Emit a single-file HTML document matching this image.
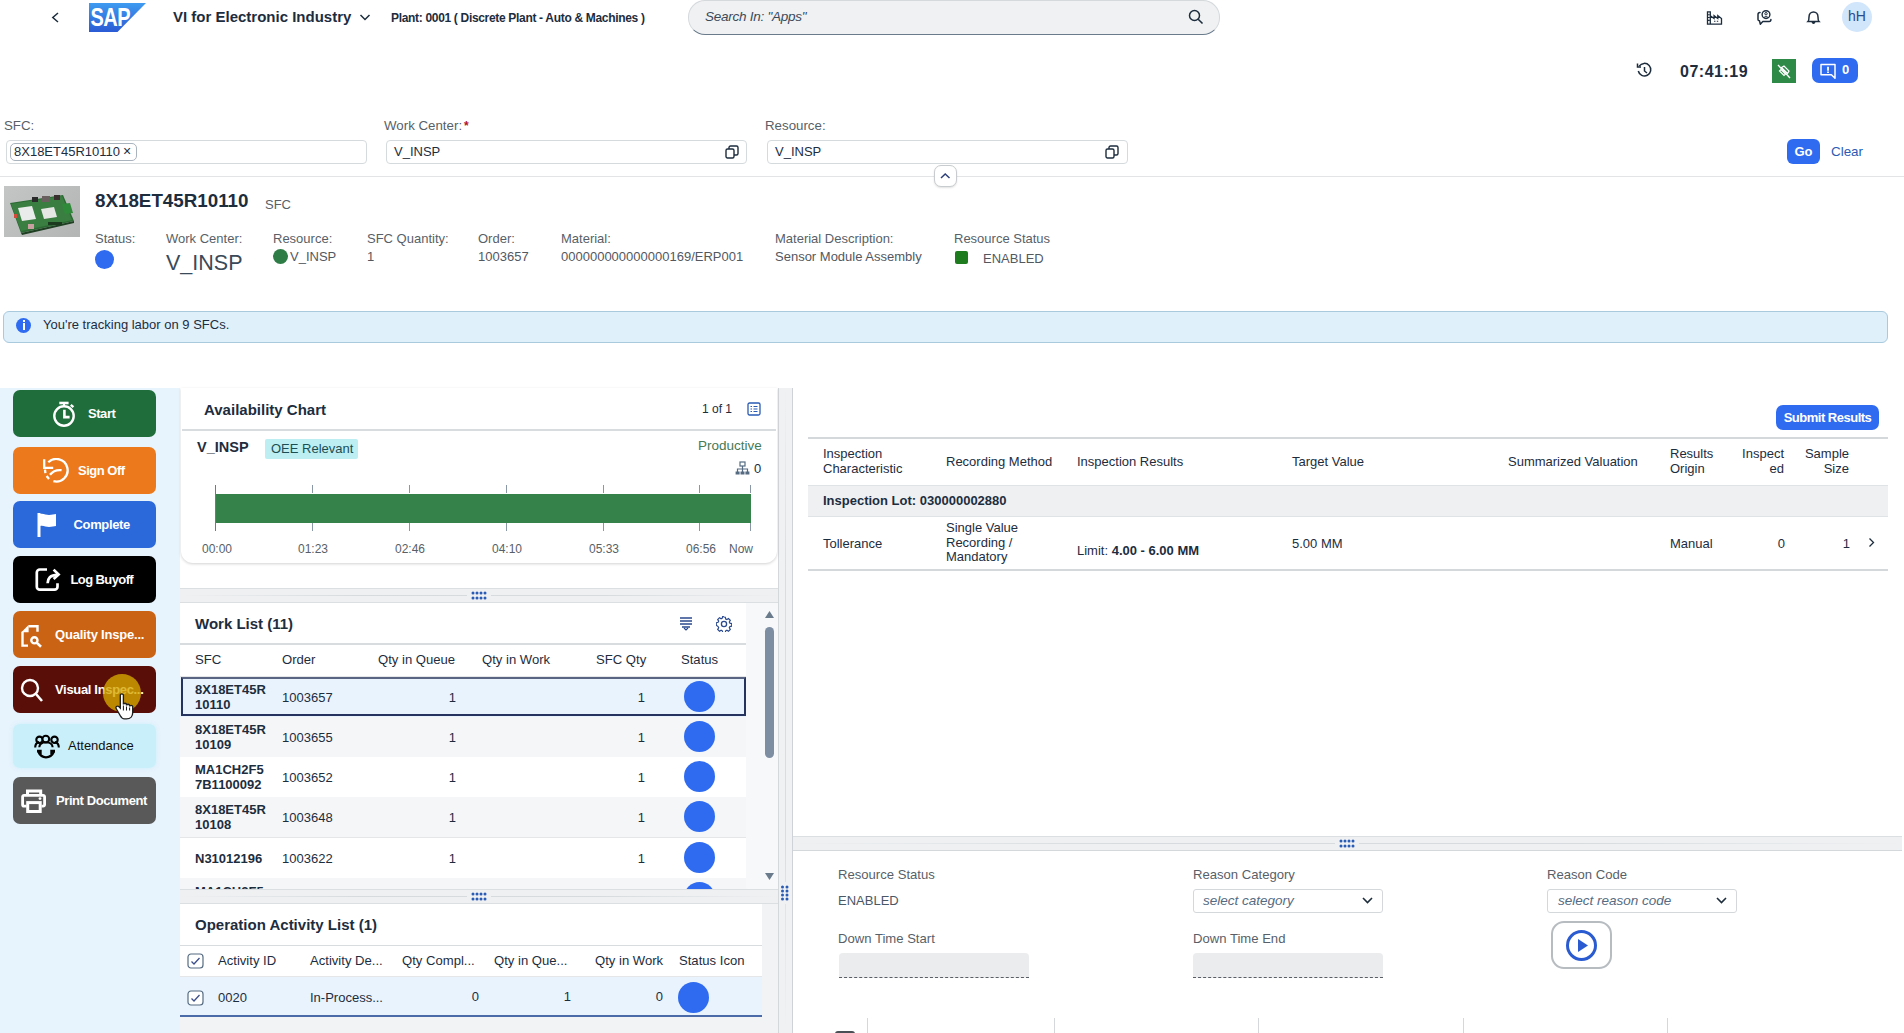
<!DOCTYPE html>
<html><head><meta charset="utf-8">
<style>
*{box-sizing:border-box;margin:0;padding:0}
html,body{width:1904px;height:1033px;overflow:hidden;background:#fff;font-family:"Liberation Sans",sans-serif;color:#1d2d3e}
.a{position:absolute;white-space:nowrap}
.lbl{color:#585f68;font-size:13px}
.val{color:#53585f;font-size:13px}
.btn{position:absolute;left:13px;width:143px;height:47px;border-radius:7px;color:#fff;font-weight:bold;font-size:13px}
.btn span{position:absolute;top:16px}
.btn svg{position:absolute}
.dot{position:absolute;border-radius:50%;background:#2f6bf0}
.hline{position:absolute;height:1px;background:#d9dcdf}
</style></head><body>

<!-- ============ HEADER ============ -->
<svg class="a" style="left:49px;top:10px" width="12" height="15" viewBox="0 0 12 15"><polyline points="9,3 3.8,7.5 9,12" fill="none" stroke="#1d2d3e" stroke-width="1.5"/></svg>
<svg class="a" style="left:89px;top:3px" width="57" height="29" viewBox="0 0 57 29">
<defs><linearGradient id="sg" x1="0" y1="0" x2="0" y2="1"><stop offset="0" stop-color="#3f9bf0"/><stop offset="1" stop-color="#2a5bd5"/></linearGradient></defs>
<polygon points="0,0 57,0 28.5,29 0,29" fill="url(#sg)"/>
<text x="0" y="0" font-family="Liberation Sans" font-weight="bold" font-size="25" fill="#fff" letter-spacing="-0.6" transform="translate(1.4 23) scale(0.8 1)">SAP</text>
</svg>
<div class="a" style="left:173px;top:8px;font-size:15px;font-weight:bold;color:#1d2d3e">VI for Electronic Industry</div>
<svg class="a" style="left:359px;top:13px" width="12" height="9" viewBox="0 0 12 9"><polyline points="1.5,2 6,6.5 10.5,2" fill="none" stroke="#1d2d3e" stroke-width="1.5"/></svg>
<div class="a" style="left:391px;top:11px;font-size:12px;font-weight:bold;color:#1d2d3e;letter-spacing:-0.32px">Plant: 0001 ( Discrete Plant - Auto &amp; Machines )</div>

<div class="a" style="left:688px;top:0px;width:532px;height:35px;border-radius:17px;background:#eff1f2;border:1px solid #d5d9dc;border-bottom:1px solid #6a7b8c"></div>
<div class="a" style="left:705px;top:9px;font-size:13.5px;letter-spacing:-0.25px;font-style:italic;color:#3b4a5a">Search In: "Apps"</div>
<svg class="a" style="left:1188px;top:9px" width="16" height="16" viewBox="0 0 16 16"><circle cx="6.5" cy="6.5" r="5" fill="none" stroke="#1d2d3e" stroke-width="1.5"/><line x1="10.2" y1="10.2" x2="14.5" y2="14.5" stroke="#1d2d3e" stroke-width="1.6"/></svg>

<!-- header icons -->
<svg class="a" style="left:1706px;top:11px" width="17" height="14" viewBox="0 0 17 15"><path d="M1 1h3v13H1zM4 5l4 3V5l4 3V5l4 3v6H4" fill="none" stroke="#1d2d3e" stroke-width="1.4"/><path d="M1.5 4h2M1.5 7h2M1.5 10h2M8 11h1.5M11 11h1.5" stroke="#1d2d3e" stroke-width="1.2"/></svg>
<svg class="a" style="left:1755px;top:9px" width="18" height="17" viewBox="0 0 18 17"><path d="M5 3.5Q3 3.5 3 5.5V10.5Q3 11.8 4.5 11.8L5.3 15.2 7.8 12.6H14.2Q15.9 12.6 15.9 10.6" fill="none" stroke="#1d2d3e" stroke-width="1.5" stroke-linejoin="round" stroke-linecap="round"/><circle cx="11" cy="5.6" r="3.9" fill="none" stroke="#1d2d3e" stroke-width="1.4"/><circle cx="11" cy="4.7" r="1.2" fill="none" stroke="#1d2d3e" stroke-width="1"/><path d="M8.9 8.4Q11 6.6 13.1 8.4" fill="none" stroke="#1d2d3e" stroke-width="1"/></svg>
<svg class="a" style="left:1806px;top:10px" width="15" height="15" viewBox="0 0 15 15"><path d="M2 11.5C3 10.5 3 9 3 7 3 4 5 2 7.5 2S12 4 12 7c0 2 0 3.5 1 4.5z" fill="none" stroke="#1d2d3e" stroke-width="1.5"/><path d="M6 12.5l1.5 1.5 1.5-1.5z" fill="#1d2d3e" stroke="#1d2d3e"/></svg>
<div class="a" style="left:1842px;top:2px;width:30px;height:30px;border-radius:50%;background:#d1e5fb;color:#2b4b8a;font-size:14px;text-align:center;line-height:29px">hH</div>

<!-- row 2 -->
<svg class="a" style="left:1636px;top:62px" width="17" height="17" viewBox="0 0 17 17"><path d="M3.2 4.2A6.3 6.3 0 1 1 2.3 9" fill="none" stroke="#1d2d3e" stroke-width="1.5"/><path d="M1.5 1.5v3.5h3.5" fill="none" stroke="#1d2d3e" stroke-width="1.5"/><path d="M8.5 5v4l2.5 2" fill="none" stroke="#1d2d3e" stroke-width="1.5"/></svg>
<div class="a" style="left:1680px;top:63px;font-size:16px;font-weight:bold;color:#1d2d3e;letter-spacing:0.5px">07:41:19</div>
<div class="a" style="left:1772px;top:59px;width:24px;height:24px;background:#2e8b47"></div>
<svg class="a" style="left:1774px;top:61px" width="20" height="20" viewBox="0 0 20 20"><line x1="4" y1="4" x2="16" y2="17" stroke="#fff" stroke-width="1.3"/><path d="M7.5 6.5L10 5l5 5-1.5 2.5z" fill="none" stroke="#fff" stroke-width="1.2"/><path d="M5.5 10L7 8.5l4.5 4.5L10 14.5z" fill="none" stroke="#fff" stroke-width="1.2"/></svg>
<div class="a" style="left:1812px;top:58px;width:46px;height:25px;border-radius:7px;background:#2f6bf0"></div>
<svg class="a" style="left:1819px;top:63px" width="18" height="17" viewBox="0 0 18 17"><path d="M2 1.5h14v13.8l-3.6-3.6H2z" fill="none" stroke="#fff" stroke-width="1.5" stroke-linejoin="round"/><path d="M9 3.8v3.9M9 8.6v1.4" stroke="#fff" stroke-width="1.8"/></svg>
<div class="a" style="left:1842px;top:62px;font-size:13px;font-weight:bold;color:#fff">0</div>

<!-- ============ FILTER BAR ============ -->
<div class="a lbl" style="left:4px;top:117.5px;font-size:13.3px">SFC:</div>
<div class="a lbl" style="left:384px;top:117.5px;font-size:13.3px">Work Center:<span style="color:#b0132b;font-weight:bold;font-size:12px;margin-left:2px">*</span></div>
<div class="a lbl" style="left:765px;top:117.5px;font-size:13.3px">Resource:</div>

<div class="a" style="left:6px;top:140px;width:361px;height:24px;border:1px solid #d5dadd;border-radius:4px;background:#fff"></div>
<div class="a" style="left:10px;top:143px;width:127px;height:18px;border:1px solid #aab4be;border-radius:5px;background:#fff"></div>
<div class="a" style="left:14px;top:144px;font-size:13px;color:#1d2d3e">8X18ET45R10110</div>
<div class="a" style="left:123px;top:143px;font-size:14px;color:#1d2d3e">×</div>

<div class="a" style="left:386px;top:140px;width:361px;height:24px;border:1px solid #d5dadd;border-radius:4px;background:#fff"></div>
<div class="a" style="left:394px;top:144px;font-size:13px;color:#1d2d3e">V_INSP</div>
<svg class="a" style="left:725px;top:145px" width="14" height="14" viewBox="0 0 14 14"><rect x="1" y="4" width="8" height="9" rx="1.5" fill="none" stroke="#1d2d3e" stroke-width="1.4"/><path d="M4 4V2.5C4 1.7 4.7 1 5.5 1h6C12.3 1 13 1.7 13 2.5v6c0 .8-.7 1.5-1.5 1.5H9" fill="none" stroke="#1d2d3e" stroke-width="1.4"/></svg>

<div class="a" style="left:767px;top:140px;width:361px;height:24px;border:1px solid #d5dadd;border-radius:4px;background:#fff"></div>
<div class="a" style="left:775px;top:144px;font-size:13px;color:#1d2d3e">V_INSP</div>
<svg class="a" style="left:1105px;top:145px" width="14" height="14" viewBox="0 0 14 14"><rect x="1" y="4" width="8" height="9" rx="1.5" fill="none" stroke="#1d2d3e" stroke-width="1.4"/><path d="M4 4V2.5C4 1.7 4.7 1 5.5 1h6C12.3 1 13 1.7 13 2.5v6c0 .8-.7 1.5-1.5 1.5H9" fill="none" stroke="#1d2d3e" stroke-width="1.4"/></svg>

<div class="a" style="left:1787px;top:139px;width:33px;height:25px;border-radius:6px;background:#2f6bf0;color:#fff;font-weight:bold;font-size:13px;text-align:center;line-height:25px">Go</div>
<div class="a" style="left:1831px;top:144px;font-size:13.4px;color:#2a5bb5">Clear</div>

<div class="hline" style="left:0;top:176px;width:1904px;background:#e2e4e6"></div>
<div class="a" style="left:934px;top:165px;width:23px;height:22px;border-radius:7px;background:#fff;border:1.5px solid #c9cccf;box-shadow:0 1px 2px rgba(0,0,0,.12)"></div>
<svg class="a" style="left:939px;top:171px" width="12" height="9" viewBox="0 0 12 9"><polyline points="2,7 6.2,3 10.5,7" fill="none" stroke="#2e3f78" stroke-width="1.5"/></svg>


<!-- ============ SFC HEADER ============ -->
<div class="a" style="left:4px;top:186px;width:76px;height:51px;background:linear-gradient(135deg,#c4c6c6,#b3b5b5);overflow:hidden">
 <svg width="76" height="51" viewBox="0 0 76 51">
 <polygon points="6,17 59,9 70,35 17,47" fill="#2c6a34"/>
 <polygon points="7,18 58,10 68,34 17,45" fill="#3b7e42"/>
 <polygon points="17,47 70,35 70,37 18,49" fill="#1f3f22"/>
 <polygon points="14,22 28,20 32,33 18,35" fill="#e9ecea"/>
 <polygon points="37,23 50,21 53,31 40,33" fill="#e4e7e4"/>
 <rect x="28" y="11" width="6" height="5" fill="#2a2a2a"/><rect x="38" y="10" width="8" height="6" fill="#6a6060"/><rect x="50" y="9" width="6" height="5" fill="#3a3030"/>
 <polygon points="58,18 66,17 69,27 61,28" fill="#2f8a3a"/>
 <rect x="24" y="38" width="6" height="5" fill="#c9a0a0"/><rect x="44" y="36" width="14" height="3" fill="#1b3a1e"/>
 <rect x="10" y="28" width="3" height="4" fill="#d14b3b"/>
 </svg>
</div>
<div class="a" style="left:95px;top:190px;font-size:18.8px;font-weight:bold;color:#1d2d3e">8X18ET45R10110</div>
<div class="a lbl" style="left:265px;top:197px;font-size:13px">SFC</div>

<div class="a lbl" style="left:95px;top:231px">Status:</div>
<div class="a lbl" style="left:166px;top:231px">Work Center:</div>
<div class="a lbl" style="left:273px;top:231px">Resource:</div>
<div class="a lbl" style="left:367px;top:231px">SFC Quantity:</div>
<div class="a lbl" style="left:478px;top:231px">Order:</div>
<div class="a lbl" style="left:561px;top:231px">Material:</div>
<div class="a lbl" style="left:775px;top:231px">Material Description:</div>
<div class="a lbl" style="left:954px;top:231px">Resource Status</div>

<div class="dot" style="left:95px;top:250px;width:19px;height:19px"></div>
<div class="a" style="left:166px;top:251px;font-size:21.5px;color:#3a4a58">V_INSP</div>
<div class="a" style="left:273px;top:249px;width:15px;height:15px;border-radius:50%;background:#2e7d47"></div>
<div class="a val" style="left:290px;top:249px">V_INSP</div>
<div class="a val" style="left:367px;top:249px">1</div>
<div class="a val" style="left:478px;top:249px">1003657</div>
<div class="a val" style="left:561px;top:249px">000000000000000169/ERP001</div>
<div class="a val" style="left:775px;top:249px">Sensor Module Assembly</div>
<div class="a" style="left:955px;top:251px;width:13px;height:13px;border-radius:2px;background:#1e7b1e"></div>
<div class="a val" style="left:983px;top:251px">ENABLED</div>

<!-- ============ INFO BAR ============ -->
<div class="a" style="left:3px;top:311px;width:1885px;height:32px;border-radius:6px;background:#dff0fb;border:1px solid #a9c9dd"></div>
<div class="a" style="left:16px;top:318px;width:15px;height:15px;border-radius:50%;background:#2f6bf0"></div>
<div class="a" style="left:22.5px;top:320px;width:2px;height:2px;background:#fff"></div>
<div class="a" style="left:22.5px;top:323px;width:2px;height:7px;background:#fff"></div>
<div class="a" style="left:43px;top:317px;font-size:13px;color:#1d2d3e">You're tracking labor on 9 SFCs.</div>


<!-- ============ SIDEBAR ============ -->
<div class="a" style="left:0;top:388px;width:180px;height:645px;background:#e7f3fd"></div>

<div class="btn" style="top:390px;background:#1f6d3b">
 <svg style="left:40px;top:11px" width="24" height="26" viewBox="0 0 24 26"><circle cx="11" cy="15" r="9.7" fill="none" stroke="#fff" stroke-width="2.4"/><path d="M6.3 2h9.3" stroke="#fff" stroke-width="2.6"/><path d="M11 2v3" stroke="#fff" stroke-width="2"/><path d="M17.8 3.8l2.6 2.4" stroke="#fff" stroke-width="2.4"/><path d="M11.4 8.8v7.3h5.2" fill="none" stroke="#fff" stroke-width="2.6"/></svg>
 <span style="left:75px;letter-spacing:-0.45px">Start</span></div>
<div class="btn" style="top:447px;background:#ec7a1c">
 <svg style="left:30px;top:11px" width="27" height="27" viewBox="0 0 27 27"><path d="M5.3 4.3A11.3 11.3 0 1 1 10.4 23.2" fill="none" stroke="#fff" stroke-width="2.3"/><path d="M6 21L3.6 18M2.4 15.2L2 11.6" fill="none" stroke="#fff" stroke-width="2.3"/><path d="M1.2 1.2v8.7h9" fill="none" stroke="#fff" stroke-width="2.3"/><path d="M7 16.8Q11 11.5 18.6 12.2" fill="none" stroke="#fff" stroke-width="2.3"/></svg>
 <span style="left:65px;letter-spacing:-0.5px">Sign Off</span></div>
<div class="btn" style="top:501px;background:#2b68d9">
 <svg style="left:24px;top:11px" width="22" height="26" viewBox="0 0 22 26"><path d="M2 1v24" stroke="#fff" stroke-width="3"/><path d="M3 2c3-1 6 1 9 1s5-1 7-1v12c-2 0-4 1-7 1s-6-2-9-1z" fill="#fff"/></svg>
 <span style="left:60.5px;letter-spacing:-0.35px">Complete</span></div>
<div class="btn" style="top:556px;background:#000">
 <svg style="left:21px;top:11px" width="28" height="26" viewBox="0 0 28 26"><path d="M13 2.5H5.8a3 3 0 0 0-3 3v14.2a3 3 0 0 0 3 3h14.7a3 3 0 0 0 3-3V16.3" fill="none" stroke="#fff" stroke-width="2.7"/><path d="M13.6 16.3c0-5 2.5-8.5 10-8.5" fill="none" stroke="#fff" stroke-width="2.7"/><path d="M19.6 2.6l5 4.9-5 4.6" fill="none" stroke="#fff" stroke-width="2.7"/></svg>
 <span style="left:57.5px;letter-spacing:-0.6px">Log Buyoff</span></div>
<div class="btn" style="top:611px;background:#cb6314">
 <svg style="left:7px;top:10px" width="26" height="27" viewBox="0 0 26 27"><polygon points="1.3,11.3 8.6,4 8.6,11.3" fill="#fff"/><path d="M8.6 5.2H17.5V10.8" fill="none" stroke="#fff" stroke-width="2.4"/><path d="M2.5 10.8V24.6H8" fill="none" stroke="#fff" stroke-width="2.4"/><circle cx="14.4" cy="19.3" r="3.1" fill="none" stroke="#fff" stroke-width="2.4"/><path d="M16.6 21.6l4.4 4.2" stroke="#fff" stroke-width="2.6"/></svg>
 <span style="left:42px;letter-spacing:-0.2px">Quality Inspe...</span></div>
<div class="btn" style="top:666px;background:#5a0e08">
 <svg style="left:7px;top:11px" width="24" height="26" viewBox="0 0 24 26"><circle cx="10" cy="11" r="8" fill="none" stroke="#fff" stroke-width="2.4"/><path d="M16 17l6 7" stroke="#fff" stroke-width="2.6"/></svg>
 <span style="left:42px;letter-spacing:-0.33px">Visual Inspec...</span></div>
<div class="a" style="left:103px;top:674px;width:38px;height:38px;border-radius:50%;background:rgba(214,168,0,.8)"></div>
<svg class="a" style="left:114px;top:692px" width="25" height="31" viewBox="0 0 24 30"><path d="M6 3c0-1.5 3-1.5 3 0v9c0-1.5 3-1.5 3 0v1c0-1.5 3-1.5 3 0v1c0-1.5 3-1.5 3 0v6c0 3-2 6-6 6H10c-2 0-3-1-4-3L2 16c-1-1.5 1-3 2.5-2L6 15.5z" fill="#fff" stroke="#1d1d1d" stroke-width="1.3"/><path d="M9 13v5M12 14v4M15 15v3" stroke="#1d1d1d" stroke-width="1"/></svg>
<div class="btn" style="top:724px;height:44px;background:#c9f0fa;color:#1d2d3e;box-shadow:0 0 4px rgba(201,240,250,.9)">
 <svg style="left:20px;top:8px" width="28" height="30" viewBox="0 0 28 30"><circle cx="6.5" cy="7.8" r="3.2" fill="none" stroke="#000" stroke-width="2.1"/><circle cx="21.5" cy="7.8" r="3.2" fill="none" stroke="#000" stroke-width="2.1"/><circle cx="12.8" cy="7.1" r="3.4" fill="#c9f0fa" stroke="#000" stroke-width="2.1"/><path d="M2.2 15.6c0-3.5 1.8-5.2 4-5.5M25.8 15.6c0-3.5-1.8-5.2-4-5.5M6.3 15.2c0-3 2.5-5 6.5-5s6.8 2 6.8 5" fill="none" stroke="#000" stroke-width="2.1"/><path d="M5.2 19.5c1.5 3.5 4.5 5.8 7.8 5.8s6.5-2.3 8-5.8" fill="none" stroke="#000" stroke-width="2.2"/><path d="M4 19h3.5v3.2M22 19h-3.5v3.2" fill="none" stroke="#000" stroke-width="2.4"/></svg>
 <span style="left:55px;top:14px;font-weight:normal;color:#111">Attendance</span></div>
<div class="btn" style="top:777px;background:#595959">
 <svg style="left:7px;top:10px" width="28" height="28" viewBox="0 0 28 28"><path d="M7.5 7.2V4h13.2v3.2" fill="none" stroke="#fff" stroke-width="3"/><path d="M6.5 19.1H4a1.4 1.4 0 0 1-1.4-1.4V9.8A1.4 1.4 0 0 1 4 8.4h19.2a1.4 1.4 0 0 1 1.4 1.4v7.9a1.4 1.4 0 0 1-1.4 1.4H21.5" fill="none" stroke="#fff" stroke-width="2.8"/><rect x="7.7" y="15.6" width="12.5" height="8.9" fill="none" stroke="#fff" stroke-width="3"/><circle cx="20" cy="11.6" r="1.4" fill="#fff"/></svg>
 <span style="left:43px;letter-spacing:-0.42px">Print Document</span></div>


<!-- ============ MIDDLE PANEL ============ -->
<div class="a" style="left:180px;top:388px;width:613px;height:645px;background:#fff"></div>

<!-- work list -->
<div class="a" style="left:180px;top:603px;width:598px;height:286px;background:#f7f8f9"></div>
<div class="a" style="left:180px;top:603px;width:566px;height:286px;background:#fff;overflow:hidden">
</div><div class="a" style="left:180px;top:677px;width:566px;height:41px;background:#e8f3fd;border-bottom:1px solid #e4e6e8"></div>
<div class="a" style="left:195px;top:683px;font-size:13px;font-weight:bold;line-height:14.5px;color:#1d2d3e">8X18ET45R<br>10110</div>
<div class="a" style="left:282px;top:690px;font-size:13px;color:#1d2d3e">1003657</div>
<div class="a" style="left:440px;width:16px;text-align:right;top:690px;font-size:13px;color:#1d2d3e">1</div>
<div class="a" style="left:629px;width:16px;text-align:right;top:690px;font-size:13px;color:#1d2d3e">1</div>
<div class="dot" style="left:684px;top:681px;width:31px;height:31px"></div>
<div class="a" style="left:180px;top:717px;width:566px;height:41px;background:#f5f6f7;border-bottom:1px solid #e4e6e8"></div>
<div class="a" style="left:195px;top:723px;font-size:13px;font-weight:bold;line-height:14.5px;color:#1d2d3e">8X18ET45R<br>10109</div>
<div class="a" style="left:282px;top:730px;font-size:13px;color:#1d2d3e">1003655</div>
<div class="a" style="left:440px;width:16px;text-align:right;top:730px;font-size:13px;color:#1d2d3e">1</div>
<div class="a" style="left:629px;width:16px;text-align:right;top:730px;font-size:13px;color:#1d2d3e">1</div>
<div class="dot" style="left:684px;top:721px;width:31px;height:31px"></div>
<div class="a" style="left:180px;top:757px;width:566px;height:41px;background:#fff;border-bottom:1px solid #e4e6e8"></div>
<div class="a" style="left:195px;top:763px;font-size:13px;font-weight:bold;line-height:14.5px;color:#1d2d3e">MA1CH2F5<br>7B1100092</div>
<div class="a" style="left:282px;top:770px;font-size:13px;color:#1d2d3e">1003652</div>
<div class="a" style="left:440px;width:16px;text-align:right;top:770px;font-size:13px;color:#1d2d3e">1</div>
<div class="a" style="left:629px;width:16px;text-align:right;top:770px;font-size:13px;color:#1d2d3e">1</div>
<div class="dot" style="left:684px;top:761px;width:31px;height:31px"></div>
<div class="a" style="left:180px;top:797px;width:566px;height:41px;background:#f5f6f7;border-bottom:1px solid #e4e6e8"></div>
<div class="a" style="left:195px;top:803px;font-size:13px;font-weight:bold;line-height:14.5px;color:#1d2d3e">8X18ET45R<br>10108</div>
<div class="a" style="left:282px;top:810px;font-size:13px;color:#1d2d3e">1003648</div>
<div class="a" style="left:440px;width:16px;text-align:right;top:810px;font-size:13px;color:#1d2d3e">1</div>
<div class="a" style="left:629px;width:16px;text-align:right;top:810px;font-size:13px;color:#1d2d3e">1</div>
<div class="dot" style="left:684px;top:801px;width:31px;height:31px"></div>
<div class="a" style="left:180px;top:838px;width:566px;height:41px;background:#fff;border-bottom:1px solid #e4e6e8"></div>
<div class="a" style="left:195px;top:851px;font-size:13px;font-weight:bold;color:#1d2d3e">N31012196</div>
<div class="a" style="left:282px;top:851px;font-size:13px;color:#1d2d3e">1003622</div>
<div class="a" style="left:440px;width:16px;text-align:right;top:851px;font-size:13px;color:#1d2d3e">1</div>
<div class="a" style="left:629px;width:16px;text-align:right;top:851px;font-size:13px;color:#1d2d3e">1</div>
<div class="dot" style="left:684px;top:842px;width:31px;height:31px"></div>
<div class="a" style="left:180px;top:878px;width:566px;height:11px;overflow:hidden;background:#f5f6f7"><div class="a" style="left:15px;top:6px;font-size:13px;font-weight:bold;color:#1d2d3e">MA1CH2F5</div><div class="dot" style="left:504px;top:4px;width:31px;height:31px"></div></div><div class="a" style="left:181px;top:677px;width:565px;height:39px;border:2px solid #27335f;border-top-color:#5a6483"></div>
<div class="a" style="left:195px;top:615px;font-size:15px;font-weight:bold;color:#1d2d3e">Work List (11)</div>
<svg class="a" style="left:679px;top:616px" width="14" height="15" viewBox="0 0 14 15"><path d="M1 2h12M1 5h12M1 8h12M3 11h8" stroke="#2a4a8f" stroke-width="1.3"/><path d="M5 12l2 2 2-2" fill="none" stroke="#2a4a8f" stroke-width="1.2"/></svg>
<svg class="a" style="left:716px;top:616px" width="16" height="16" viewBox="0 0 16 16"><path d="M8 1l1.3.2.4 1.8 1.2.6 1.6-1 1.8 1.8-1 1.6.6 1.2 1.8.4v2.6l-1.8.4-.6 1.2 1 1.6-1.8 1.8-1.6-1-1.2.6-.4 1.8H6.7l-.4-1.8-1.2-.6-1.6 1-1.8-1.8 1-1.6-.6-1.2L.3 9.3V6.7l1.8-.4.6-1.2-1-1.6 1.8-1.8 1.6 1 1.2-.6.4-1.8z" fill="none" stroke="#2a4a8f" stroke-width="1.2"/><circle cx="8" cy="8" r="2.6" fill="none" stroke="#2a4a8f" stroke-width="1.3"/></svg>
<div class="hline" style="left:180px;top:643px;width:566px;height:2px;background:#d9dcdf"></div>
<div class="a" style="left:195px;top:652px;font-size:13.2px;color:#1d2d3e">SFC</div>
<div class="a" style="left:282px;top:652px;font-size:13.1px;color:#1d2d3e">Order</div>
<div class="a" style="left:378px;top:652px;font-size:13.1px;color:#1d2d3e">Qty in Queue</div>
<div class="a" style="left:482px;top:652px;font-size:13.1px;color:#1d2d3e">Qty in Work</div>
<div class="a" style="left:596px;top:652px;font-size:13.1px;color:#1d2d3e">SFC Qty</div>
<div class="a" style="left:681px;top:652px;font-size:13.1px;color:#1d2d3e">Status</div>
<div class="hline" style="left:180px;top:676px;width:566px;background:#e4e6e8"></div>
<!-- scrollbar -->
<svg class="a" style="left:764px;top:610px" width="11" height="9" viewBox="0 0 11 9"><polygon points="5.5,1 10,8 1,8" fill="#6a7b8c"/></svg>
<div class="a" style="left:765px;top:627px;width:9px;height:131px;border-radius:5px;background:#7d8ea3"></div>
<svg class="a" style="left:764px;top:872px" width="11" height="9" viewBox="0 0 11 9"><polygon points="1,1 10,1 5.5,8" fill="#6a7b8c"/></svg>

<!-- splitter 2 -->
<div class="a" style="left:180px;top:889px;width:598px;height:15px;background:#eef0f2;border-top:1px solid #dcdfe2;border-bottom:1px solid #dcdfe2"></div>
<svg class="a" style="left:471px;top:892px" width="16" height="9" viewBox="0 0 16 9"><g fill="#2a5bb5"><circle cx="2" cy="2" r="1.5"/><circle cx="6" cy="2" r="1.5"/><circle cx="10" cy="2" r="1.5"/><circle cx="14" cy="2" r="1.5"/><circle cx="2" cy="7" r="1.5"/><circle cx="6" cy="7" r="1.5"/><circle cx="10" cy="7" r="1.5"/><circle cx="14" cy="7" r="1.5"/></g></svg>

<!-- operation activity list -->
<div class="a" style="left:180px;top:904px;width:598px;height:129px;background:#f2f3f4"></div>
<div class="a" style="left:180px;top:904px;width:582px;height:111px;background:#fff"></div>
<div class="a" style="left:195px;top:916px;font-size:15px;font-weight:bold;color:#1d2d3e">Operation Activity List (1)</div>
<div class="hline" style="left:180px;top:945px;width:582px;background:#d9dcdf"></div>
<svg class="a" style="left:187px;top:953px" width="17" height="16" viewBox="0 0 17 16"><rect x="1" y="1" width="15" height="14" rx="3" fill="#fff" stroke="#556b82" stroke-width="1.2"/><path d="M4.5 8.5l2.5 2.5 5.5-6" fill="none" stroke="#3d4f8a" stroke-width="1.3"/></svg>
<div class="a" style="left:218px;top:953px;font-size:13.1px;color:#1d2d3e">Activity ID</div>
<div class="a" style="left:310px;top:953px;font-size:13.1px;color:#1d2d3e">Activity De...</div>
<div class="a" style="left:402px;top:953px;font-size:13.1px;color:#1d2d3e">Qty Compl...</div>
<div class="a" style="left:494px;top:953px;font-size:13.1px;color:#1d2d3e">Qty in Que...</div>
<div class="a" style="left:595px;top:953px;font-size:13.1px;color:#1d2d3e">Qty in Work</div>
<div class="a" style="left:679px;top:953px;font-size:13.1px;color:#1d2d3e">Status Icon</div>
<div class="hline" style="left:180px;top:976px;width:582px;background:#e4e6e8"></div>
<div class="a" style="left:180px;top:977px;width:582px;height:39.5px;background:#e8f3fd;border-bottom:2px solid #4a6aa8"></div>
<svg class="a" style="left:187px;top:990px" width="17" height="16" viewBox="0 0 17 16"><rect x="1" y="1" width="15" height="14" rx="3" fill="#fff" stroke="#556b82" stroke-width="1.2"/><path d="M4.5 8.5l2.5 2.5 5.5-6" fill="none" stroke="#3d4f8a" stroke-width="1.3"/></svg>
<div class="a" style="left:218px;top:990px;font-size:13px;color:#1d2d3e">0020</div>
<div class="a" style="left:310px;top:990px;font-size:13px;color:#1d2d3e">In-Process...</div>
<div class="a" style="left:460px;width:19px;text-align:right;top:989px;font-size:13px;color:#1d2d3e">0</div>
<div class="a" style="left:552px;width:19px;text-align:right;top:989px;font-size:13px;color:#1d2d3e">1</div>
<div class="a" style="left:644px;width:19px;text-align:right;top:989px;font-size:13px;color:#1d2d3e">0</div>
<div class="dot" style="left:678px;top:982px;width:31px;height:31px"></div>

<!-- vertical splitter -->
<div class="a" style="left:778px;top:388px;width:15px;height:645px;background:#eff1f3;border-left:1px solid #d5d8db;border-right:1px solid #cfd3d7"></div>
<svg class="a" style="left:780px;top:885px" width="10" height="16" viewBox="0 0 10 16"><g fill="#2a5bb5"><circle cx="2.5" cy="2" r="1.5"/><circle cx="7" cy="2" r="1.5"/><circle cx="2.5" cy="6" r="1.5"/><circle cx="7" cy="6" r="1.5"/><circle cx="2.5" cy="10" r="1.5"/><circle cx="7" cy="10" r="1.5"/><circle cx="2.5" cy="14" r="1.5"/><circle cx="7" cy="14" r="1.5"/></g></svg>

<!-- availability card -->
<div class="a" style="left:181px;top:388px;width:596px;height:175px;background:#fff;border-radius:0 0 12px 12px;box-shadow:0 1px 3px rgba(0,0,0,.18)"></div>
<div class="a" style="left:204px;top:401px;font-size:15px;font-weight:bold;color:#1d2d3e">Availability Chart</div>
<div class="a" style="left:702px;top:402px;font-size:12px;color:#1d2d3e">1 of 1</div>
<svg class="a" style="left:747px;top:402px" width="14" height="14" viewBox="0 0 14 14"><rect x="1" y="1" width="12" height="12" rx="1.5" fill="none" stroke="#2a5bb5" stroke-width="1.3"/><path d="M3.5 4.5h1.5M3.5 7h1.5M3.5 9.5h1.5M6.5 4.5h4M6.5 7h4M6.5 9.5h4" stroke="#2a5bb5" stroke-width="1.2"/></svg>
<div class="hline" style="left:182px;top:429px;width:594px;height:2px;background:#d9dcdf"></div>
<div class="a" style="left:197px;top:439px;font-size:14.5px;font-weight:bold;color:#1d2d3e">V_INSP</div>
<div class="a" style="left:265px;top:439px;width:93px;height:20px;background:#bdeef1;border-radius:2px"></div>
<div class="a" style="left:271px;top:441px;font-size:13px;color:#1b4d55">OEE Relevant</div>
<div class="a" style="left:698px;top:438px;font-size:13.5px;color:#467a55">Productive</div>
<svg class="a" style="left:735px;top:461px" width="15" height="14" viewBox="0 0 15 14"><rect x="5" y="1" width="5" height="4" fill="none" stroke="#556b82" stroke-width="1.2"/><path d="M7.5 5v3M2.5 11V8h10v3M7.5 8v3" fill="none" stroke="#556b82" stroke-width="1.2"/><rect x="0.6" y="10.5" width="4" height="3" fill="#556b82"/><rect x="5.5" y="10.5" width="4" height="3" fill="#556b82"/><rect x="10.4" y="10.5" width="4" height="3" fill="#556b82"/></svg>
<div class="a" style="left:754px;top:461px;font-size:13px;color:#1d2d3e">0</div>

<div class="a" style="left:215px;top:494px;width:536px;height:29px;background:#35824a"></div>
<div class="a" style="left:215px;top:485px;width:1px;height:46px;background:#6a7b8c"></div>
<div class="a" style="left:312px;top:485px;width:1px;height:8px;background:#8a97a4"></div><div class="a" style="left:312px;top:523px;width:1px;height:8px;background:#8a97a4"></div>
<div class="a" style="left:409px;top:485px;width:1px;height:8px;background:#8a97a4"></div><div class="a" style="left:409px;top:523px;width:1px;height:8px;background:#8a97a4"></div>
<div class="a" style="left:506px;top:485px;width:1px;height:8px;background:#8a97a4"></div><div class="a" style="left:506px;top:523px;width:1px;height:8px;background:#8a97a4"></div>
<div class="a" style="left:603px;top:485px;width:1px;height:8px;background:#8a97a4"></div><div class="a" style="left:603px;top:523px;width:1px;height:8px;background:#8a97a4"></div>
<div class="a" style="left:699px;top:485px;width:1px;height:8px;background:#8a97a4"></div><div class="a" style="left:699px;top:523px;width:1px;height:8px;background:#8a97a4"></div>
<div class="a" style="left:750px;top:485px;width:1px;height:8px;background:#8a97a4"></div><div class="a" style="left:750px;top:523px;width:1px;height:8px;background:#8a97a4"></div>
<div class="a lbl" style="left:202px;top:542px;font-size:12px">00:00</div>
<div class="a lbl" style="left:298px;top:542px;font-size:12px">01:23</div>
<div class="a lbl" style="left:395px;top:542px;font-size:12px">02:46</div>
<div class="a lbl" style="left:492px;top:542px;font-size:12px">04:10</div>
<div class="a lbl" style="left:589px;top:542px;font-size:12px">05:33</div>
<div class="a lbl" style="left:686px;top:542px;font-size:12px">06:56</div>
<div class="a lbl" style="left:729px;top:542px;font-size:12px">Now</div>

<!-- splitter 1 -->
<div class="a" style="left:180px;top:588px;width:598px;height:15px;background:#eef0f2;border-top:1px solid #dcdfe2;border-bottom:1px solid #dcdfe2"></div>
<svg class="a" style="left:471px;top:591px" width="16" height="9" viewBox="0 0 16 9"><g fill="#2a5bb5"><circle cx="2" cy="2" r="1.5"/><circle cx="6" cy="2" r="1.5"/><circle cx="10" cy="2" r="1.5"/><circle cx="14" cy="2" r="1.5"/><circle cx="2" cy="7" r="1.5"/><circle cx="6" cy="7" r="1.5"/><circle cx="10" cy="7" r="1.5"/><circle cx="14" cy="7" r="1.5"/></g></svg>


<!-- ============ RIGHT PANEL ============ -->
<div class="a" style="left:1776px;top:405px;width:103px;height:25px;border-radius:7px;background:#2f6bf0;color:#fff;font-weight:bold;font-size:13px;text-align:center;line-height:25px;letter-spacing:-0.5px">Submit Results</div>
<div class="hline" style="left:808px;top:437px;width:1080px;height:2px;background:#d5d8db"></div>
<div class="a" style="left:823px;top:447px;font-size:13px;line-height:14.7px;color:#1d2d3e">Inspection<br>Characteristic</div>
<div class="a" style="left:946px;top:454px;font-size:13px;color:#1d2d3e">Recording Method</div>
<div class="a" style="left:1077px;top:454px;font-size:13px;color:#1d2d3e">Inspection Results</div>
<div class="a" style="left:1292px;top:454px;font-size:13px;color:#1d2d3e">Target Value</div>
<div class="a" style="left:1508px;top:454px;font-size:13px;color:#1d2d3e">Summarized Valuation</div>
<div class="a" style="left:1670px;top:447px;font-size:13px;line-height:14.7px;color:#1d2d3e">Results<br>Origin</div>
<div class="a" style="left:1729px;width:55px;text-align:right;top:447px;font-size:13px;line-height:14.7px;color:#1d2d3e">Inspect<br>ed</div>
<div class="a" style="left:1789px;width:60px;text-align:right;top:447px;font-size:13px;line-height:14.7px;color:#1d2d3e">Sample<br>Size</div>
<div class="a" style="left:808px;top:485px;width:1080px;height:32px;background:#eef0f2;border-top:1px solid #e0e3e6;border-bottom:1px solid #e0e3e6"></div>
<div class="a" style="left:823px;top:493px;font-size:13px;font-weight:bold;color:#1d2d3e">Inspection Lot: 030000002880</div>
<div class="a" style="left:823px;top:536px;font-size:13px;color:#1d2d3e">Tollerance</div>
<div class="a" style="left:946px;top:521px;font-size:13px;line-height:14.7px;color:#1d2d3e">Single Value<br>Recording /<br>Mandatory</div>
<div class="a" style="left:1077px;top:543px;font-size:13px;color:#1d2d3e">Limit: <b>4.00 - 6.00 MM</b></div>
<div class="a" style="left:1292px;top:536px;font-size:13px;color:#1d2d3e">5.00 MM</div>
<div class="a" style="left:1670px;top:536px;font-size:13px;color:#1d2d3e">Manual</div>
<div class="a" style="left:1765px;width:20px;text-align:right;top:536px;font-size:13px;color:#1d2d3e">0</div>
<div class="a" style="left:1830px;width:20px;text-align:right;top:536px;font-size:13px;color:#1d2d3e">1</div>
<svg class="a" style="left:1867px;top:537px" width="9" height="11" viewBox="0 0 9 11"><polyline points="2.5,1.5 6.5,5.5 2.5,9.5" fill="none" stroke="#1d2d3e" stroke-width="1.3"/></svg>
<div class="hline" style="left:808px;top:569px;width:1080px;height:2px;background:#d5d8db"></div>

<!-- horizontal splitter right -->
<div class="a" style="left:793px;top:836px;width:1109px;height:15px;background:#eef0f2;border-top:1px solid #dcdfe2;border-bottom:1px solid #d5d8db"></div>
<svg class="a" style="left:1339px;top:839px" width="16" height="9" viewBox="0 0 16 9"><g fill="#2a5bb5"><circle cx="2" cy="2" r="1.5"/><circle cx="6" cy="2" r="1.5"/><circle cx="10" cy="2" r="1.5"/><circle cx="14" cy="2" r="1.5"/><circle cx="2" cy="7" r="1.5"/><circle cx="6" cy="7" r="1.5"/><circle cx="10" cy="7" r="1.5"/><circle cx="14" cy="7" r="1.5"/></g></svg>

<div class="a lbl" style="left:838px;top:867px;font-size:13.1px">Resource Status</div>
<div class="a" style="left:838px;top:893px;font-size:13px;color:#4a5866">ENABLED</div>
<div class="a lbl" style="left:1193px;top:867px;font-size:13.1px">Reason Category</div>
<div class="a" style="left:1193px;top:889px;width:190px;height:24px;border:1px solid #d5d8db;border-radius:3px;background:#fff"></div>
<div class="a" style="left:1203px;top:893px;font-size:13.5px;font-style:italic;color:#556b82">select category</div>
<svg class="a" style="left:1361px;top:896px" width="13" height="9" viewBox="0 0 13 9"><polyline points="2,2 6.5,6.5 11,2" fill="none" stroke="#1d2d3e" stroke-width="1.6"/></svg>
<div class="a lbl" style="left:1547px;top:867px;font-size:13.1px">Reason Code</div>
<div class="a" style="left:1547px;top:889px;width:190px;height:24px;border:1px solid #d5d8db;border-radius:3px;background:#fff"></div>
<div class="a" style="left:1558px;top:893px;font-size:13.5px;font-style:italic;color:#556b82">select reason code</div>
<svg class="a" style="left:1715px;top:896px" width="13" height="9" viewBox="0 0 13 9"><polyline points="2,2 6.5,6.5 11,2" fill="none" stroke="#1d2d3e" stroke-width="1.6"/></svg>
<div class="a lbl" style="left:838px;top:931px;font-size:13.1px">Down Time Start</div>
<div class="a" style="left:839px;top:953px;width:190px;height:25px;background:#ebeced;border-radius:4px 4px 0 0;border-bottom:1px dashed #5a5f66"></div>
<div class="a lbl" style="left:1193px;top:931px;font-size:13.1px">Down Time End</div>
<div class="a" style="left:1193px;top:953px;width:190px;height:25px;background:#ebeced;border-radius:4px 4px 0 0;border-bottom:1px dashed #5a5f66"></div>
<div class="a" style="left:1551px;top:921px;width:61px;height:48px;border-radius:13px;background:#fff;border:2px solid #b7bcc1"></div>
<svg class="a" style="left:1565px;top:929px" width="33" height="33" viewBox="0 0 33 33"><circle cx="16.5" cy="16.5" r="14" fill="none" stroke="#2a5bd0" stroke-width="3"/><polygon points="13,10 23,16.5 13,23" fill="#2a5bd0"/></svg>

<!-- bottom table partial -->
<div class="a" style="left:835px;top:1031px;width:20px;height:3px;border-radius:3px 3px 0 0;background:#4a4f55"></div>
<div class="a" style="left:867px;top:1018px;width:1px;height:15px;background:#d5d8db"></div>
<div class="a" style="left:1054px;top:1018px;width:1px;height:15px;background:#d5d8db"></div>
<div class="a" style="left:1258px;top:1018px;width:1px;height:15px;background:#d5d8db"></div>
<div class="a" style="left:1463px;top:1018px;width:1px;height:15px;background:#d5d8db"></div>
<div class="a" style="left:1667px;top:1018px;width:1px;height:15px;background:#d5d8db"></div>


<!-- splitter center lines -->
<div class="a" style="left:793px;top:843px;width:1109px;height:1px;background:linear-gradient(90deg,rgba(200,204,208,0),rgba(200,204,208,.6) 30%,rgba(200,204,208,.6) 70%,rgba(200,204,208,0))"></div>
<div class="a" style="left:1335px;top:838px;width:24px;height:12px;background:#eef0f2"></div>
<svg class="a" style="left:1339px;top:839px" width="16" height="9" viewBox="0 0 16 9"><g fill="#2a5bb5"><circle cx="2" cy="2" r="1.5"/><circle cx="6" cy="2" r="1.5"/><circle cx="10" cy="2" r="1.5"/><circle cx="14" cy="2" r="1.5"/><circle cx="2" cy="7" r="1.5"/><circle cx="6" cy="7" r="1.5"/><circle cx="10" cy="7" r="1.5"/><circle cx="14" cy="7" r="1.5"/></g></svg>
<div class="a" style="left:180px;top:595px;width:598px;height:1px;background:linear-gradient(90deg,rgba(200,204,208,0),rgba(200,204,208,.6) 30%,rgba(200,204,208,.6) 70%,rgba(200,204,208,0))"></div>
<div class="a" style="left:467px;top:590px;width:24px;height:12px;background:#eef0f2"></div>
<svg class="a" style="left:471px;top:591px" width="16" height="9" viewBox="0 0 16 9"><g fill="#2a5bb5"><circle cx="2" cy="2" r="1.5"/><circle cx="6" cy="2" r="1.5"/><circle cx="10" cy="2" r="1.5"/><circle cx="14" cy="2" r="1.5"/><circle cx="2" cy="7" r="1.5"/><circle cx="6" cy="7" r="1.5"/><circle cx="10" cy="7" r="1.5"/><circle cx="14" cy="7" r="1.5"/></g></svg>
<div class="a" style="left:180px;top:896px;width:598px;height:1px;background:linear-gradient(90deg,rgba(200,204,208,0),rgba(200,204,208,.6) 30%,rgba(200,204,208,.6) 70%,rgba(200,204,208,0))"></div>
<div class="a" style="left:467px;top:891px;width:24px;height:12px;background:#eef0f2"></div>
<svg class="a" style="left:471px;top:892px" width="16" height="9" viewBox="0 0 16 9"><g fill="#2a5bb5"><circle cx="2" cy="2" r="1.5"/><circle cx="6" cy="2" r="1.5"/><circle cx="10" cy="2" r="1.5"/><circle cx="14" cy="2" r="1.5"/><circle cx="2" cy="7" r="1.5"/><circle cx="6" cy="7" r="1.5"/><circle cx="10" cy="7" r="1.5"/><circle cx="14" cy="7" r="1.5"/></g></svg>
<div class="a" style="left:785px;top:388px;width:1px;height:645px;background:linear-gradient(180deg,rgba(200,204,208,0),rgba(200,204,208,.55) 30%,rgba(200,204,208,.55) 70%,rgba(200,204,208,0))"></div>
<div class="a" style="left:779px;top:882px;width:13px;height:22px;background:#eff1f3"></div>
<svg class="a" style="left:780px;top:885px" width="10" height="16" viewBox="0 0 10 16"><g fill="#2a5bb5"><circle cx="2.5" cy="2" r="1.5"/><circle cx="7" cy="2" r="1.5"/><circle cx="2.5" cy="6" r="1.5"/><circle cx="7" cy="6" r="1.5"/><circle cx="2.5" cy="10" r="1.5"/><circle cx="7" cy="10" r="1.5"/><circle cx="2.5" cy="14" r="1.5"/><circle cx="7" cy="14" r="1.5"/></g></svg>
</body></html>
